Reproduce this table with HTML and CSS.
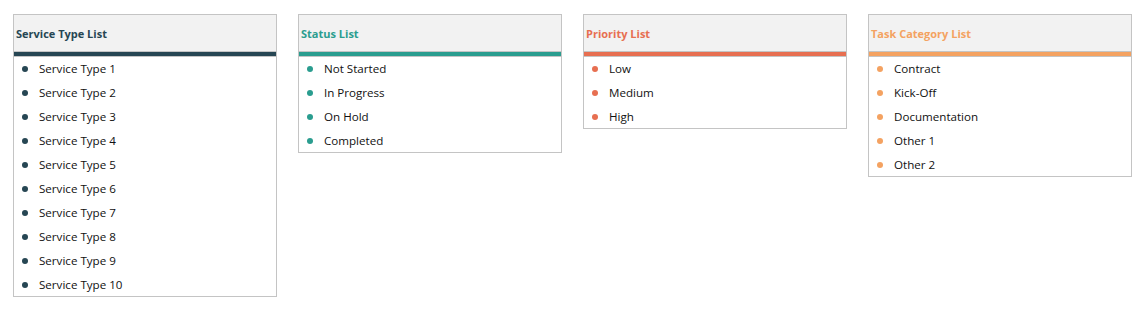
FILE: index.html
```html
<!DOCTYPE html>
<html lang="en">
<head>
<meta charset="utf-8">
<title>Lists</title>
<link rel="stylesheet" href="styles.css">
</head>
<body>
<div class="lists">
  <section class="card card--slate">
    <h3 class="card__title">Service Type List</h3>
    <div class="card__bar"></div>
    <ul class="card__items">
      <li>Service Type 1</li>
      <li>Service Type 2</li>
      <li>Service Type 3</li>
      <li>Service Type 4</li>
      <li>Service Type 5</li>
      <li>Service Type 6</li>
      <li>Service Type 7</li>
      <li>Service Type 8</li>
      <li>Service Type 9</li>
      <li>Service Type 10</li>
    </ul>
  </section>
  <section class="card card--teal">
    <h3 class="card__title">Status List</h3>
    <div class="card__bar"></div>
    <ul class="card__items">
      <li>Not Started</li>
      <li>In Progress</li>
      <li>On Hold</li>
      <li>Completed</li>
    </ul>
  </section>
  <section class="card card--coral">
    <h3 class="card__title">Priority List</h3>
    <div class="card__bar"></div>
    <ul class="card__items">
      <li>Low</li>
      <li>Medium</li>
      <li>High</li>
    </ul>
  </section>
  <section class="card card--sand">
    <h3 class="card__title">Task Category List</h3>
    <div class="card__bar"></div>
    <ul class="card__items">
      <li>Contract</li>
      <li>Kick-Off</li>
      <li>Documentation</li>
      <li>Other 1</li>
      <li>Other 2</li>
    </ul>
  </section>
</div>
</body>
</html>
```

FILE: styles.css
```css
html, body {
  margin: 0;
  padding: 0;
  background: #ffffff;
}

body {
  font-family: "Open Sans", "Liberation Sans", sans-serif;
  font-size: 11.6px;
  color: #111111;
}

.lists {
  display: flex;
  align-items: flex-start;
  gap: 21px;
  padding: 14px 0 0 13px;
}

.card {
  width: 262px;
  border: 1px solid #c4c4c4;
  background: #ffffff;
}

.card__title {
  margin: 0;
  height: 34px;
  padding: 2px 0 0 2px;
  line-height: 34px;
  background: #f2f2f2;
  border-bottom: 1px solid #c4c4c4;
  font-size: 11px;
  font-weight: 700;
}

.card__bar {
  height: 4px;
  border-bottom: 1px solid #c4c4c4;
}

.card__items {
  list-style: none;
  margin: 0;
  padding: 0;
}

.card__items li {
  display: flex;
  align-items: center;
  height: 23px;
  padding: 0 0 1px 25px;
  position: relative;
}

.card__items li:last-child {
  height: 22px;
}

.card__items li::before {
  content: "";
  position: absolute;
  left: 8px;
  top: 9px;
  width: 6px;
  height: 6px;
  border-radius: 50%;
  background: var(--accent);
}

.card--slate { --accent: #264653; }
.card--teal  { --accent: #2a9d8f; }
.card--coral { --accent: #e76f51; }
.card--sand  { --accent: #f4a261; }

.card__bar { background: var(--accent); }
.card__title { color: var(--accent); }
```
